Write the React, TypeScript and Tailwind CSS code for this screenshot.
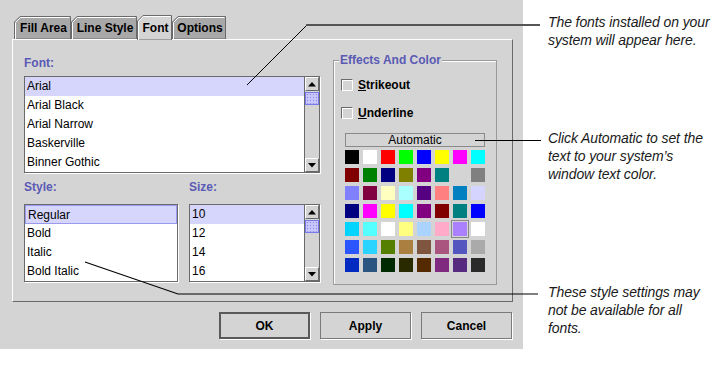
import React from "react";

const swatches = [
  ["#000000", "#ffffff", "#ff0000", "#00ff00", "#0000ff", "#ffff00", "#ff00ff", "#00ffff"],
  ["#800000", "#008000", "#000080", "#808000", "#800080", "#008080", "transparent", "#808080"],
  ["#8080ff", "#800040", "#ffffc0", "#aaffff", "#550080", "#ff8080", "#0080c0", "#d4d4ff"],
  ["#000080", "#ff00ff", "#ffff00", "#00ffff", "#800080", "#800000", "#008080", "#0000ff"],
  ["#00d4ff", "#55ffff", "#ffffff", "#ffff80", "#aad4ff", "#ffaac8", "#aa80ff", "#ffffff"],
  ["#2b55ff", "#2bd4ff", "#557f00", "#aa7f40", "#7f5540", "#aa557f", "#5555bf", "#aaaaaa"],
  ["#002ac0", "#2a5580", "#002a00", "#2a2a00", "#552a00", "#7f2a7f", "#552a7f", "#2a2a2a"],
];

const label = "text-[12px] leading-[14px] font-bold text-[#5a5ab5]";

type TabProps = { label: string; w: number; cls: string; active?: boolean };

function Tab({ label, w, cls, active }: TabProps) {
  const h = active ? 25 : 23;
  return (
    <div className={`relative flex items-center justify-center pl-[2px] text-[12px] font-bold text-black ${cls} ${active ? "h-[25px] -mb-px z-10" : "h-[23px]"}`}>
      <svg className="absolute left-0 top-0" width={w} height={h}>
        <polygon
          points={`0.5,${h} 0.5,6 6,0.5 ${w - 0.5},0.5 ${w - 0.5},${h}`}
          fill={active ? "#d4d4d4" : "#a8a8a8"}
          stroke="#6a6a6a"
        />
        <polyline points={`1.5,${h} 1.5,6.5 6.5,1.5 ${w - 1.5},1.5`} fill="none" stroke="#ffffff" />
      </svg>
      <span className="relative">{label}</span>
    </div>
  );
}

function Arrow({ down }: { down?: boolean }) {
  return (
    <div className="flex h-[14px] items-center justify-center border border-t-white border-l-white border-r-[#6a6a6a] border-b-[#6a6a6a] bg-[#d4d4d4]">
      <svg width="8" height="5">
        <polygon points={down ? "0,0 8,0 4,4.5" : "0,4.5 8,4.5 4,0"} fill="#000" />
      </svg>
    </div>
  );
}

function ScrollBar() {
  return (
    <div className="flex w-[15px] flex-col border-l border-[#6a6a6a] bg-[#d4d4d4]">
      <Arrow />
      <div className="mt-px h-[13px] border border-[#7a7af0] bg-[#c6c6fa] bg-[radial-gradient(#8a8ae8_0.8px,transparent_0.9px)] bg-[length:3px_3px]" />
      <div className="flex-1" />
      <Arrow down />
    </div>
  );
}

function ListBox({ items, cls, scroll, focus }: { items: string[]; cls: string; scroll?: boolean; focus?: boolean }) {
  return (
    <div className={`flex border border-[#6a6a6a] bg-white shadow-[1px_1px_0_#ffffff] ${cls}`}>
      <div className="flex-1 overflow-hidden">
        {items.map((it, i) => (
          <div
            key={it}
            className={`h-[19px] pl-[2px] text-[12px] leading-[19px] text-black ${i === 0 ? "bg-[#d6d6fc]" : ""} ${i === 0 && focus ? "border border-[#9a9af0] pl-[1px] leading-[17px]" : ""}`}
          >
            {it}
          </div>
        ))}
      </div>
      {scroll && <ScrollBar />}
    </div>
  );
}

function Check({ text, cls }: { text: string; cls: string }) {
  return (
    <div className={`ml-[7px] flex h-[12px] items-center ${cls}`}>
      <div className="h-[12px] w-[12px] border border-[#6a6a6a] border-r-white border-b-white bg-[#d4d4d4] shadow-[inset_1px_1px_0_#ffffff]" />
      <span className="ml-[5px] text-[12px] font-bold text-black">
        <span className="underline">{text[0]}</span>
        {text.slice(1)}
      </span>
    </div>
  );
}

function Button({ text, def }: { text: string; def?: boolean }) {
  return (
    <button
      className={`h-[27px] w-[91px] bg-[#d4d4d4] text-[12px] font-bold text-black shadow-[1px_1px_0_#ffffff] ${def ? "border-2 border-[#5a5a5a]" : "border border-[#7a7a7a]"}`}
    >
      {text}
    </button>
  );
}

export default function App() {
  return (
    <div className="relative flex h-[376px] w-[720px] overflow-hidden bg-white font-['Liberation_Sans',Arial,sans-serif]">
      <div className="h-[349px] w-[523px] bg-[#d4d4d4] pt-[15px]">
        <div className="flex h-[24px] items-end pl-[14px]">
          <Tab label="Fill Area" w={57} cls="w-[57px]" />
          <Tab label="Line Style" w={66} cls="w-[66px]" />
          <Tab label="Font" w={35} cls="w-[35px]" active />
          <Tab label="Options" w={54} cls="w-[54px]" />
        </div>
        <div className="ml-[12px] flex h-[263px] w-[501px] border border-t-white border-l-white border-r-[#6a6a6a] border-b-[#6a6a6a]">
          <div className="ml-[11px] w-[296px] pt-[16px]">
            <div className={label}>Font:</div>
            <ListBox
              cls="mt-[6px] h-[97px]"
              items={["Arial", "Arial Black", "Arial Narrow", "Baskerville", "Binner Gothic"]}
              scroll
            />
            <div className="mt-[7px] flex gap-[11px]">
              <div className="w-[154px]">
                <div className={label}>Style:</div>
                <ListBox cls="mt-[10px] h-[78px]" items={["Regular", "Bold", "Italic", "Bold Italic"]} focus />
              </div>
              <div className="w-[131px]">
                <div className={label}>Size:</div>
                <ListBox cls="mt-[10px] h-[78px]" items={["10", "12", "14", "16"]} scroll />
              </div>
            </div>
          </div>
          <div className="relative ml-[13px] mt-[20px] h-[225px] w-[164px] border border-[#9a9a9a] shadow-[inset_1px_1px_0_#ffffff]">
            <div className={`absolute -top-[8px] left-[5px] bg-[#d4d4d4] px-px ${label}`}>Effects And Color</div>
            <Check text="Strikeout" cls="mt-[18px]" />
            <Check text="Underline" cls="mt-[16px]" />
            <div className="ml-[11px] mt-[14px] flex h-[14px] w-[140px] items-center justify-center border border-[#8a8a8a] text-[12px] leading-[12px] text-black">
              Automatic
            </div>
            <div className="ml-[11px] mt-[3px] grid w-[140px] grid-cols-[repeat(8,14px)] gap-[4px]">
              {swatches.flatMap((row, r) =>
                row.map((c, i) => (
                  <div
                    key={`${r}-${i}`}
                    className={`h-[14px] w-[14px] ${r === 4 && i === 6 ? "ring-1 ring-[#888888] ring-offset-1 ring-offset-[#d4d4d4]" : ""}`}
                    style={{ backgroundColor: c }}
                  />
                ))
              )}
            </div>
          </div>
        </div>
        <div className="mt-[10px] flex justify-end gap-[10px] pr-[11px]">
          <Button text="OK" def />
          <Button text="Apply" />
          <Button text="Cancel" />
        </div>
      </div>

      <div className="flex-1 pl-[25px] text-[14px] italic leading-[18px] tracking-[-0.1px] text-[#1a1a1a]">
        <p className="mt-[13px]">
          The fonts installed on your
          <br />
          system will appear here.
        </p>
        <p className="mt-[80px]">
          Click Automatic to set the
          <br />
          text to your system’s
          <br />
          window text color.
        </p>
        <p className="mt-[100px]">
          These style settings may
          <br />
          not be available for all
          <br />
          fonts.
        </p>
      </div>

      <svg className="pointer-events-none absolute left-0 top-0" width="720" height="376">
        <polyline points="247,85 307,25" fill="none" stroke="#000" strokeWidth="1" />
        <line x1="306" y1="25" x2="540" y2="25" stroke="#555" strokeWidth="2" />
        <line x1="475" y1="140.5" x2="541" y2="140.5" stroke="#000" strokeWidth="1" />
        <polyline points="85,262 178,294 538,294" fill="none" stroke="#000" strokeWidth="1.2" />
      </svg>
    </div>
  );
}
